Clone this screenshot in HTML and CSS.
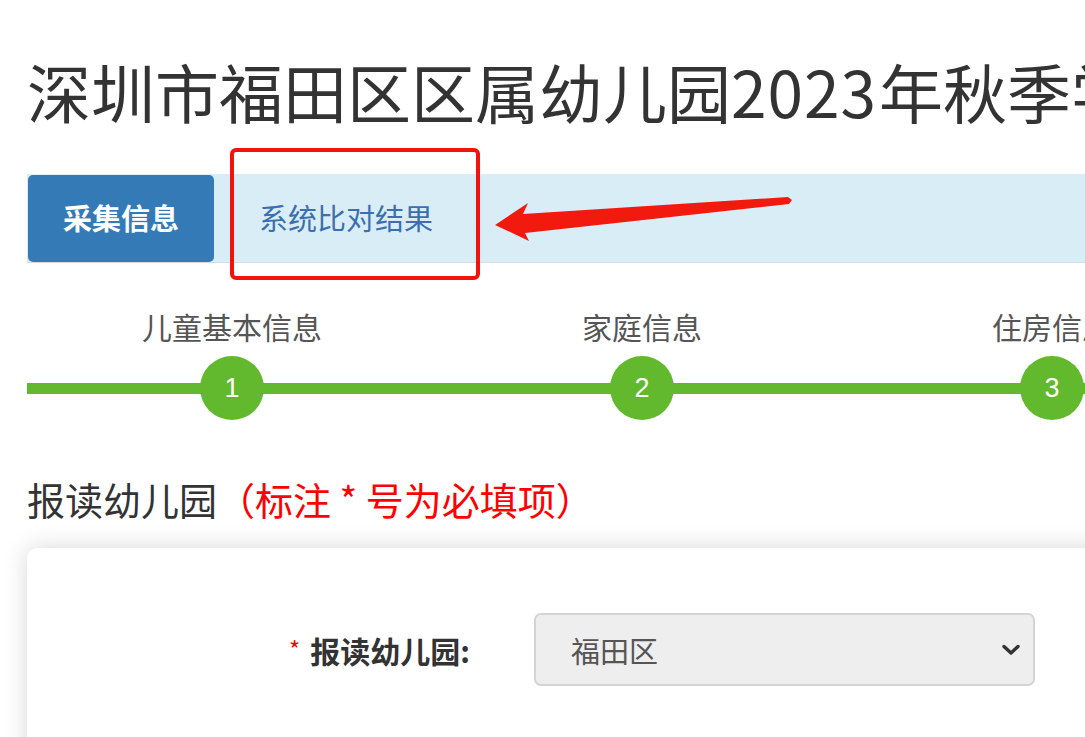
FILE: index.html
```html
<!DOCTYPE html>
<html lang="zh-CN">
<head>
    <meta charset="UTF-8">
    <meta name="viewport" content="width=device-width, initial-scale=1.0">
    <title>深圳市福田区区属幼儿园2023年秋季学位申请</title>
    <link rel="stylesheet" href="styles.css">
</head>
<body>
    <div class="page">
        <!-- Page Title -->
        <h1 class="page-title">深圳市福田区区属幼儿园<span class="year">2023</span>年秋季学位申请</h1>

        <!-- Tabs -->
        <div class="tabs">
            <a class="tab tab-active" href="#">采集信息</a>
            <a class="tab" href="#">系统比对结果</a>
        </div>

        <!-- Steps -->
        <div class="steps">
            <div class="step-labels">
                <span class="step-label">儿童基本信息</span>
                <span class="step-label">家庭信息</span>
                <span class="step-label">住房信息</span>
                <span class="step-label">确认提交</span>
            </div>
            <div class="step-track">
                <span class="step-cell"><span class="step-dot">1</span></span>
                <span class="step-cell"><span class="step-dot">2</span></span>
                <span class="step-cell"><span class="step-dot">3</span></span>
                <span class="step-cell"><span class="step-dot">4</span></span>
            </div>
        </div>

        <!-- Section -->
        <h3 class="section-title">报读幼儿园<span class="note">（标注 * 号为必填项）</span></h3>

        <div class="card">
            <div class="form-row">
                <label class="form-label"><span class="required">*</span>报读幼儿园:</label>
                <div class="select-box">
                    <span>福田区</span>
                    <svg class="chevron" width="20" height="12" viewBox="0 0 20 12">
                        <path d="M3 2.5 L10 9 L17 2.5" fill="none" stroke="#333" stroke-width="3.4" stroke-linecap="round" stroke-linejoin="round"/>
                    </svg>
                </div>
            </div>
        </div>

        <!-- Annotation -->
        <div class="mark-box"></div>
        <svg class="mark-arrow" width="310" height="50" viewBox="490 195 310 50">
            <polygon points="495,225 528,203 523,214 788,197 792,200 789,204 525,233 529,241" fill="#f21a0f"/>
        </svg>
    </div>
</body>
</html>
```

FILE: styles.css
```css
* {
    margin: 0;
    padding: 0;
    box-sizing: border-box;
}

body {
    font-family: "Noto Sans CJK SC", sans-serif;
    color: #333;
    background: #fff;
    overflow: hidden;
}

.page {
    position: relative;
    width: 2000px;
    padding: 45px 0 0 27px;
}

/* Title */
.page-title {
    font-size: 64px;
    font-weight: normal;
    line-height: 90px;
    color: #333;
    white-space: nowrap;
}

.year {
    letter-spacing: 1px;
    margin-right: 2px;
}

/* Tabs */
.tabs {
    display: flex;
    margin-top: 39px;
    height: 89px;
    background: #d9edf7;
    border-bottom: 1px solid #d6dde2;
}

.tab {
    display: flex;
    align-items: center;
    padding: 0 45px 3px;
    font-size: 29px;
    color: #3a6fb0;
    text-decoration: none;
}

.tab-active {
    width: 186px;
    justify-content: center;
    padding: 0 0 3px;
    margin-left: 1px;
    margin-top: 1px;
    background: #337ab7;
    color: #fff;
    font-weight: 600;
    border-radius: 5px;
}

/* Steps */
.steps {
    margin-top: 42px;
}

.step-labels,
.step-track {
    display: flex;
}

.step-label {
    width: 410px;
    text-align: center;
    font-size: 30px;
    line-height: 42px;
    color: #555;
}

.step-track {
    margin-top: 9px;
    background: linear-gradient(to bottom, transparent 27px, #62b92d 27px, #62b92d 38px, transparent 38px);
}

.step-cell {
    width: 410px;
    display: flex;
    justify-content: center;
}

.step-dot {
    width: 64px;
    height: 64px;
    border-radius: 50%;
    background: #62b92d;
    color: #fff;
    font-family: "Liberation Sans", sans-serif;
    font-size: 27px;
    display: flex;
    align-items: center;
    justify-content: center;
}

/* Section */
.section-title {
    margin-top: 53px;
    font-size: 38px;
    font-weight: normal;
    line-height: 52px;
    color: #333;
}

.note {
    color: #f00;
}

.card {
    margin-top: 23px;
    height: 300px;
    background: #fff;
    border-radius: 10px;
    box-shadow: 0 0 24px rgba(0, 0, 0, 0.16);
    padding-top: 65px;
}

.form-row {
    display: flex;
    align-items: center;
}

.form-label {
    width: 507px;
    padding-right: 64px;
    text-align: right;
    font-size: 30px;
    font-weight: bold;
    color: #333;
}

.required {
    color: #f00;
    font-weight: normal;
    font-size: 24px;
    margin-right: 10px;
    vertical-align: 4px;
}

.select-box {
    width: 501px;
    height: 73px;
    display: flex;
    align-items: center;
    justify-content: space-between;
    padding: 0 12px 0 35px;
    background: #eee;
    border: 2px solid #d4d4d4;
    border-radius: 7px;
    font-size: 29px;
    color: #555;
}

/* Annotation */
.mark-box {
    position: absolute;
    left: 230px;
    top: 148px;
    width: 250px;
    height: 132px;
    border: 4px solid #f2140c;
    border-radius: 6px;
}

.mark-arrow {
    position: absolute;
    left: 490px;
    top: 195px;
}
```
